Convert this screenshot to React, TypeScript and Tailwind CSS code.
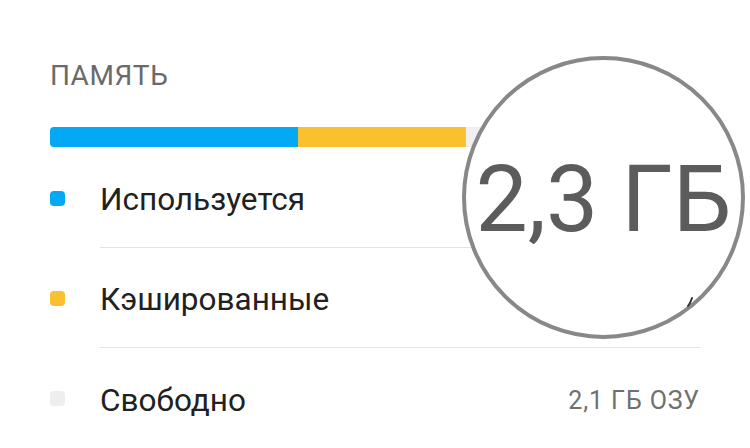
import React from "react";

type Row = { label: string; color: string; value?: string };

const rows: Row[] = [
  { label: "Используется", color: "bg-[#03a9f4]" },
  { label: "Кэшированные", color: "bg-[#fbc02d]" },
  { label: "Свободно", color: "bg-[#eeeeee]", value: "2,1 ГБ ОЗУ" },
];

export default function App() {
  return (
    <div
      className="relative w-[750px] h-[448px] overflow-hidden bg-white"
      style={{ fontFamily: "Roboto, 'Noto Sans', sans-serif" }}
    >
      <div className="pl-[50px] pr-[50px]">
        <div className="pt-[62px] text-[28px] leading-[28px] tracking-[0.6px] text-[#6a6a6a]">ПАМЯТЬ</div>

        {/* usage bar */}
        <div className="mt-[37px] flex h-[20px] w-full overflow-hidden rounded-[4px] bg-[#efefef]">
          <div className="w-[248px] bg-[#03a9f4]" />
          <div className="w-[168px] bg-[#fbc02d]" />
        </div>

        <div className="mt-[1px]">
          {rows.map((r, i) => (
            <div key={r.label} className="flex h-[100px] items-center">
              <div className={`h-[15px] w-[15px] rounded-[4px] ${r.color}`} />
              <div
                className={`ml-[35px] flex h-full flex-1 items-center pt-[5px] ${
                  i < rows.length - 1 ? "border-b border-[#e4e4e4]" : ""
                }`}
              >
                <span className="flex-1 text-[31.5px] leading-[32px] text-[#212121]">{r.label}</span>
                {r.value && (
                  <span className="text-[25px] leading-[25px] tracking-[0.9px] text-[#707070]">
                    {r.value}
                  </span>
                )}
              </div>
            </div>
          ))}
        </div>
      </div>

      {/* magnifier */}
      <div className="absolute left-[462px] top-[56px] flex h-[283px] w-[283px] items-center justify-center rounded-full border-[4px] border-[#888888] bg-white">
        <span className="mt-[4px] whitespace-nowrap text-[93px] leading-[93px] text-[#5c5c5c]">2,3 ГБ</span>
      </div>
      <svg className="absolute left-[684px] top-[294px]" width="12" height="14" viewBox="0 0 12 14">
        <path d="M4 12 L6 9 L8 4" stroke="#333" strokeWidth="2" fill="none" strokeLinecap="round" />
      </svg>
    </div>
  );
}
